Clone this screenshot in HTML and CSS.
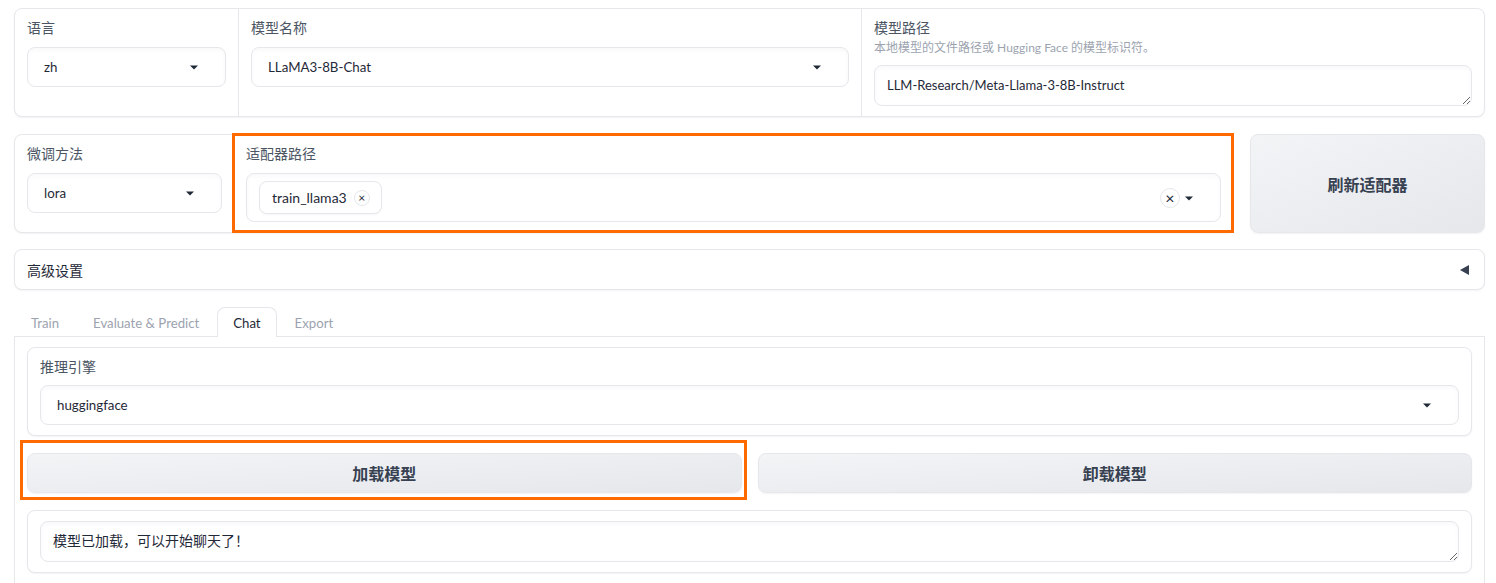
FILE: index.html
```html
<!DOCTYPE html>
<html lang="zh">
<head>
  <meta charset="UTF-8" />
  <meta name="viewport" content="width=device-width, initial-scale=1" />
  <title>LLaMA Board</title>
  <link rel="stylesheet" href="styles.css">
</head>
<body>
  <div class="page">
    <!-- Modelo -->
    <div class="block row-top">
      <div class="col col-lang">
        <span class="label">语言</span>
        <div class="select">
          <span class="value">zh</span>
          <svg class="caret" width="18" height="18" viewBox="0 0 18 18"><path d="M5 7.5l4 4 4-4z"/></svg>
        </div>
      </div>
      <div class="col col-name">
        <span class="label">模型名称</span>
        <div class="select">
          <span class="value">LLaMA3-8B-Chat</span>
          <svg class="caret" width="18" height="18" viewBox="0 0 18 18"><path d="M5 7.5l4 4 4-4z"/></svg>
        </div>
      </div>
      <div class="col col-path">
        <span class="label">模型路径</span>
        <span class="info">本地模型的文件路径或 Hugging Face 的模型标识符。</span>
        <textarea class="text latin" rows="1">LLM-Research/Meta-Llama-3-8B-Instruct</textarea>
      </div>
    </div>

    <!-- Adaptador -->
    <div class="row-adapter">
      <div class="block group">
        <div class="col col-method">
          <span class="label">微调方法</span>
          <div class="select">
            <span class="value">lora</span>
            <svg class="caret" width="18" height="18" viewBox="0 0 18 18"><path d="M5 7.5l4 4 4-4z"/></svg>
          </div>
        </div>
        <div class="col col-adapter mark">
          <span class="label">适配器路径</span>
          <div class="select multi">
            <span class="chip">train_llama3 <span class="chip-x">×</span></span>
            <span class="tools">
              <span class="clear">×</span>
              <svg class="caret" width="18" height="18" viewBox="0 0 18 18"><path d="M5 7.5l4 4 4-4z"/></svg>
            </span>
          </div>
        </div>
      </div>
      <button class="btn btn-refresh">刷新适配器</button>
    </div>

    <div class="block accordion">
      <span>高级设置</span>
      <svg width="9" height="10" viewBox="0 0 9 10"><path d="M9 0v10L0 5z"/></svg>
    </div>

    <!-- Pestañas -->
    <div class="tabs">
      <div class="tab-nav">
        <button class="tab">Train</button>
        <button class="tab">Evaluate &amp; Predict</button>
        <button class="tab selected">Chat</button>
        <button class="tab">Export</button>
      </div>
      <div class="tab-body">
        <div class="block inner">
          <span class="label">推理引擎</span>
          <div class="select">
            <span class="value">huggingface</span>
            <svg class="caret" width="18" height="18" viewBox="0 0 18 18"><path d="M5 7.5l4 4 4-4z"/></svg>
          </div>
        </div>
        <div class="btn-row">
          <div class="btn-wrap mark-btn">
            <button class="btn">加载模型</button>
          </div>
          <div class="btn-wrap">
            <button class="btn">卸载模型</button>
          </div>
        </div>
        <div class="block inner">
          <textarea class="text" rows="1">模型已加载，可以开始聊天了！</textarea>
        </div>
      </div>
    </div>
  </div>
</body>
</html>
```

FILE: styles.css
```css
* {
  box-sizing: border-box;
}

body {
  margin: 0;
  font-family: Lato, "Noto Sans CJK SC", sans-serif;
  font-size: 14px;
  color: #1f2937;
  background: #fff;
  overflow: hidden;
}

.page {
  padding: 8px 11px 0 14px;
  display: flex;
  flex-direction: column;
  gap: 16px;
}

.block {
  border: 1px solid #e5e7eb;
  border-radius: 8px;
  background: #fff;
  box-shadow: 0 1px 2px rgba(0, 0, 0, 0.05);
}

.label {
  display: block;
  font-size: 14px;
  line-height: 18px;
  color: #4b5563;
}

.info {
  display: block;
  margin-top: 3px;
  font-size: 12px;
  line-height: 16px;
  color: #9ca3af;
}

.col {
  padding: 10px 12px;
}

.row-top {
  display: flex;
}

.col-lang {
  flex: 0 0 223px;
}

.col-name {
  flex: 0 0 623px;
  border-left: 1px solid #e5e7eb;
}

.col-path {
  flex: 1;
  border-left: 1px solid #e5e7eb;
}

.select {
  margin-top: 10px;
  height: 40px;
  display: flex;
  align-items: center;
  justify-content: space-between;
  padding: 0 22px 0 16px;
  border: 1px solid #e5e7eb;
  border-radius: 8px;
  background: #fff;
  box-shadow: inset 0 2px 4px rgba(0, 0, 0, 0.03);
}

.value {
  font-size: 13.3px;
}

.caret {
  fill: #1f2937;
}

.text {
  display: block;
  width: 100%;
  height: 41px;
  margin-top: 9px;
  padding: 9px 12px;
  border: 1px solid #e5e7eb;
  border-radius: 8px;
  font: inherit;
  line-height: 20px;
  color: #1f2937;
  resize: vertical;
  outline: none;
  box-shadow: inset 0 2px 4px rgba(0, 0, 0, 0.03);
}

.text.latin {
  font-size: 13px;
}

.row-adapter {
  display: flex;
  gap: 16px;
  margin-top: 1px;
}

.group {
  flex: 1;
  display: flex;
}

.col-method {
  flex: 0 0 219px;
}

.col-adapter {
  flex: 1;
  position: relative;
}

.mark::after,
.mark-btn::after {
  content: "";
  position: absolute;
  border: 3px solid #ff6a00;
  pointer-events: none;
}

.mark::after {
  top: -2px;
  left: -2px;
  right: -1px;
  bottom: -1px;
}

.select.multi {
  height: 49px;
  padding: 0 22px 0 12px;
}

.chip {
  display: inline-flex;
  align-items: center;
  gap: 7px;
  height: 33px;
  padding: 0 11px 0 12px;
  border: 1px solid #e5e7eb;
  border-radius: 8px;
  background: #fff;
  box-shadow: 0 1px 2px rgba(0, 0, 0, 0.04);
}

.chip-x {
  width: 16px;
  height: 16px;
  border: 1px solid #e5e7eb;
  border-radius: 50%;
  display: flex;
  align-items: center;
  justify-content: center;
  font-size: 12px;
  line-height: 1;
}

.tools {
  display: flex;
  align-items: center;
}

.clear {
  width: 20px;
  height: 20px;
  border: 1px solid #e5e7eb;
  border-radius: 50%;
  display: flex;
  align-items: center;
  justify-content: center;
  font-size: 16px;
  line-height: 1;
}

.btn {
  border: 1px solid #e5e7eb;
  border-radius: 8px;
  background: linear-gradient(to bottom right, #f3f4f6, #e5e7eb);
  color: #374151;
  font-family: inherit;
  font-size: 16px;
  font-weight: 600;
  box-shadow: 0 1px 2px rgba(0, 0, 0, 0.05);
  cursor: pointer;
}

.btn-refresh {
  flex: 0 0 235px;
}

.accordion {
  height: 41px;
  display: flex;
  align-items: center;
  justify-content: space-between;
  padding: 0 15px 0 12px;
}

.accordion svg {
  fill: #374151;
}

.tabs {
  margin-top: 1px;
}

.tab-nav {
  display: flex;
  gap: 2px;
  padding-left: 1px;
}

.tab {
  height: 30px;
  padding: 0 15px;
  border: 1px solid transparent;
  border-bottom: none;
  border-radius: 8px 8px 0 0;
  background: none;
  font-family: inherit;
  font-size: 13.2px;
  color: #9ca3af;
  margin-bottom: -1px;
  position: relative;
}

.tab.selected {
  border-color: #e5e7eb;
  background: #fff;
  color: #1f2937;
}

.tab-body {
  border: 1px solid #e5e7eb;
  padding: 10px 12px 20px;
  display: flex;
  flex-direction: column;
  gap: 17px;
}

.inner {
  padding: 10px 12px;
}

.inner .select {
  margin-top: 9px;
  height: 40px;
}

.inner .text {
  margin-top: 0;
}

.btn-row {
  display: flex;
  gap: 16px;
}

.btn-wrap {
  flex: 1;
  display: flex;
}

.btn-wrap .btn {
  flex: 1;
  height: 40px;
}

.mark-btn {
  position: relative;
}

.mark-btn::after {
  top: -13px;
  left: -7px;
  right: -5px;
  bottom: -7px;
}
```
